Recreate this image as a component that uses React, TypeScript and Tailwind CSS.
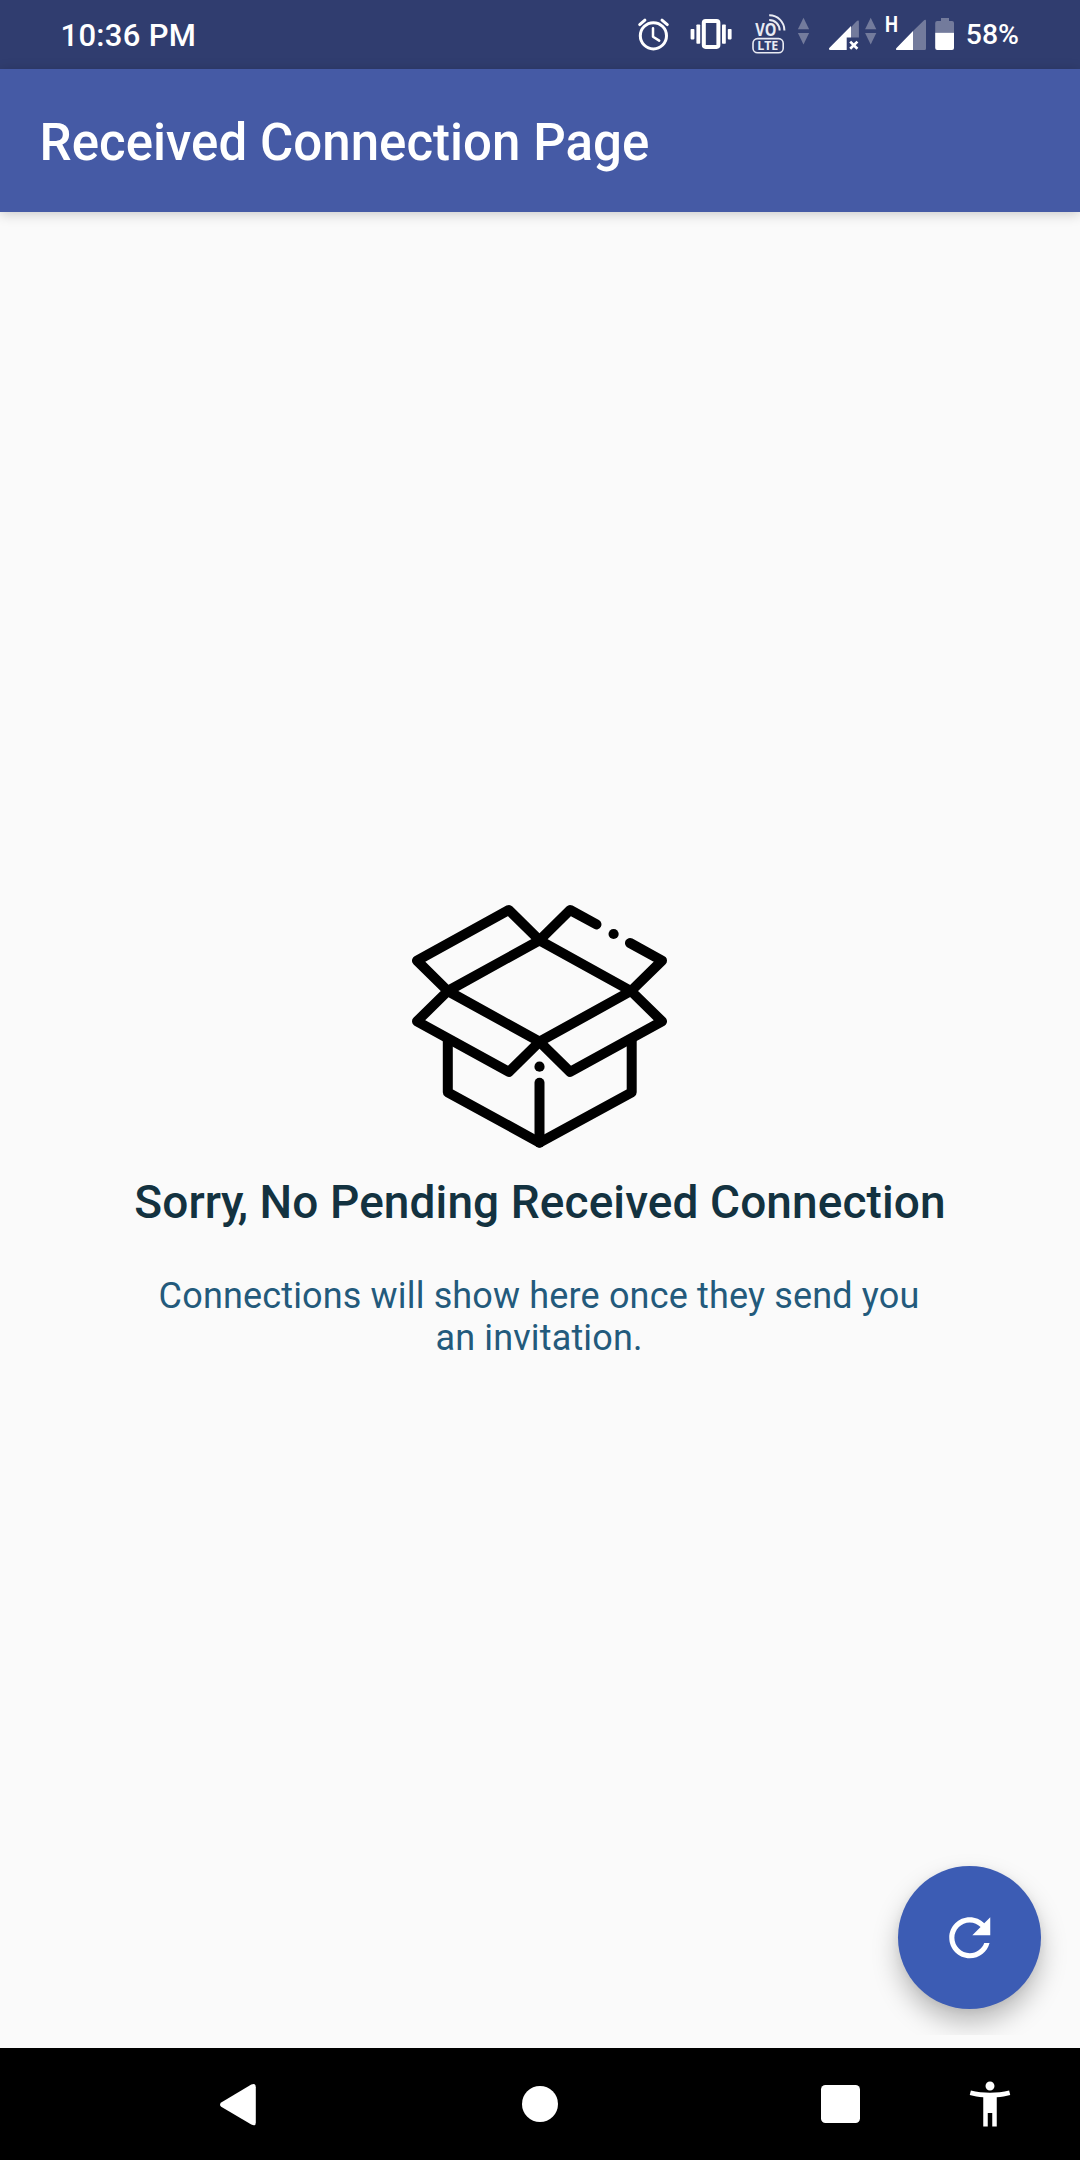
import type { ReactNode } from "react";

/* Status bar glyphs share one 69px tall strip; x is where the glyph's slice of the strip begins. */
function Glyph({ x, w, children }: { x: number; w: number; children: ReactNode }) {
  return (
    <svg width={w} height={69} viewBox={`${x} 0 ${w} 69`} className="block shrink-0 overflow-visible">
      {children}
    </svg>
  );
}

const DIM = "#737b9c";

function DataArrows({ x }: { x: number }) {
  return (
    <g fill={DIM}>
      <path d={`M${x} 29.2h11.2L${x + 5.6} 17.8z`} />
      <path d={`M${x} 33h11.2L${x + 5.6} 44.4z`} />
    </g>
  );
}

function StatusBar() {
  return (
    <header className="flex h-[69px] items-center justify-between bg-[#303d6f] pl-[60.5px] text-white">
      <span className="pt-0.5 text-[31px] leading-none font-medium tracking-[0.3px]">10:36 PM</span>
      <div className="flex items-center pr-[61px]">
        <Glyph x={632} w={54}>
          <g fill="none" stroke="#fff" strokeLinecap="round">
            <circle cx="653.4" cy="35.8" r="13.1" strokeWidth="3" />
            <path d="M653 28.2v8.6l6.2 3.8" strokeWidth="2.5" strokeLinejoin="round" />
            <path d="M639.7 24.6l5.2-4.4M662 20.2l5.3 4.4" strokeWidth="3" />
          </g>
        </Glyph>
        <Glyph x={686} w={62}>
          <rect x="703.8" y="20.9" width="14.6" height="26" rx="1.8" fill="none" stroke="#fff" strokeWidth="4" />
          <g fill="#fff">
            <rect x="696.4" y="24.5" width="3.8" height="19.2" rx=".8" />
            <rect x="690.6" y="29" width="3.8" height="10.4" rx=".8" />
            <rect x="722" y="24.5" width="3.8" height="19.2" rx=".8" />
            <rect x="727.8" y="29" width="3.8" height="10.4" rx=".8" />
          </g>
        </Glyph>
        <Glyph x={748} w={44}>
          <text x="755.2" y="36" fill="#e9ebf3" fontSize="17" fontWeight="700" textLength="21.2" lengthAdjust="spacingAndGlyphs" className="font-['Open_Sans',sans-serif]">VO</text>
          <g fill="none" stroke="#e9ebf3" strokeWidth="2">
            <path d="M769.2 15.3A15 15 0 0 1 784.4 30.4" />
            <path d="M769.2 20.1A10.4 10.4 0 0 1 779.7 30.4" />
            <rect x="753" y="38.6" width="30.2" height="14.2" rx="4.6" strokeWidth="1.6" />
          </g>
          <text x="757.2" y="50.2" fill="#e9ebf3" fontSize="12.4" fontWeight="700" className="font-['Open_Sans',sans-serif]">LTE</text>
        </Glyph>
        <Glyph x={792} w={34}>
          <DataArrows x={797.9} />
        </Glyph>
        <Glyph x={826} w={36}>
          <path d="M851 27.2l5.6-5.9c1.2-1.2 2.3-.9 2.3.7V37.5H851z" fill={DIM} />
          <path d="M851 26v11.5h-4.3V50h-16.4c-1.5 0-1.8-1.1-.8-2.2z" fill="#fff" />
          <path d="M850.2 41.6l7.2 7.2M857.4 41.6l-7.2 7.2" stroke="#fff" strokeWidth="2.7" fill="none" />
        </Glyph>
        <Glyph x={862} w={22}>
          <DataArrows x={865.1} />
        </Glyph>
        <Glyph x={884} w={44}>
          <text x="885" y="31.8" fill="#fff" fontSize="21.6" fontWeight="700" textLength="13" lengthAdjust="spacingAndGlyphs" className="font-['Roboto',sans-serif]">H</text>
          <path d="M913 31l10.8-10.5c1.2-1.2 2.2-.8 2.2.7V48.5q0 1.5-1.5 1.5H913z" fill={DIM} />
          <path d="M913 31v19h-15.6c-1.5 0-1.9-1.1-.9-2.1z" fill="#fff" />
        </Glyph>
        <Glyph x={928} w={38}>
          <path d="M935.2 32.8V23q0-2 2-2h3.8v-3h8v3h3q2 0 2 2v9.8z" fill={DIM} />
          <path d="M935.2 32.8H954V48q0 2-2 2h-14.8q-2 0-2-2z" fill="#fff" />
        </Glyph>
        <span className="pt-0.5 text-[28.4px] leading-none font-medium">58%</span>
      </div>
    </header>
  );
}

function OpenBox() {
  return (
    <svg width="256" height="250" viewBox="411 900 256 250" className="block" fill="none" stroke="#000" strokeWidth="10" strokeLinecap="round" strokeLinejoin="round">
      <path d="M539.5 940.3L631 991l-91.5 50.7L447.8 991z" />
      <path d="M539.5 940.3l-30.6-30.3L417 960.6 447.8 991 417 1021.3l91.9 50.6 30.6-30.2 30.6 30.2 91.9-50.6L631 991l31-30.4-32-17.6" />
      <path d="M539.5 940.3l30.6-30.3 26.4 14.4" />
      <path d="M447.8 1041v51.3l91.7 50.3 92.2-50.3V1041" />
      <path d="M539.5 1142.6v-59.8" />
      <circle cx="613.6" cy="934" r="5.1" fill="#000" stroke="none" />
      <circle cx="539.5" cy="1066.7" r="5.1" fill="#000" stroke="none" />
    </svg>
  );
}

function NavBar() {
  return (
    <nav className="flex h-[112px] items-center bg-black pl-[220px]">
      <svg width="36" height="42" viewBox="0 0 36 42" className="mt-px block" fill="#fff">
        <path d="M1.2 18.6L31.3.6Q35.8-1.2 35.8 3.2V38.4Q35.8 42.8 31.3 40.6L1.2 22.8Q-1.2 20.7 1.2 18.6z" />
      </svg>
      <span className="ml-[266px] block size-9 rounded-full bg-white" />
      <span className="ml-[263.3px] block size-[38.5px] rounded-[4.5px] bg-white" />
      <svg width="54" height="54" viewBox="0 0 24 24" className="ml-[103px] block" fill="#fff">
        <path d="M20.5 6c-2.61.7-5.67 1-8.5 1s-5.89-.3-8.5-1L3 8c1.86.5 4 .83 6 1v13h2v-6h2v6h2V9c2-.17 4.14-.5 6-1l-.5-2zM12 6c1.1 0 2-.9 2-2s-.9-2-2-2-2 .9-2 2 .9 2 2 2z" />
      </svg>
    </nav>
  );
}

export default function App() {
  return (
    <div className="flex h-[2160px] w-[1080px] flex-col overflow-hidden bg-[#fafafa] font-['Roboto',sans-serif]">
      <StatusBar />
      <div className="z-10 flex h-[143px] items-center bg-[#455aa5] pt-1 pl-[39.6px] shadow-[0_2px_12px_rgba(0,0,0,0.2)]">
        <h1 className="text-[51px] leading-none font-medium tracking-[0.03px] text-white">Received Connection Page</h1>
      </div>
      <main className="relative flex flex-1 flex-col items-center pt-[688px] pr-0.5">
        <OpenBox />
        <h2 className="mt-[25px] ml-0.5 text-[46px] leading-[54px] font-medium tracking-[0.09px] text-[#133240]">
          Sorr<span className="tracking-[-6px]">y</span>, No Pending Received Connection
        </h2>
        <p className="mt-[46px] w-[780px] text-center text-[36px] leading-[42.2px] tracking-[0.157px] text-[#235a7c]">
          Connections will show here once they send you an invitation.
        </p>
        <div className="absolute right-0 bottom-[13px] flex h-[220px] w-[240px] items-end justify-end overflow-hidden pr-[39px] pb-[26px]">
          <button
            aria-label="Refresh"
            className="flex size-[143px] items-center justify-center rounded-full bg-[#3c5cb4] shadow-[0_14px_26px_rgba(0,0,0,0.25),0_2px_8px_rgba(0,0,0,0.06)]"
          >
            <svg width="61.5" height="61.5" viewBox="0 0 24 24" fill="#fff">
              <path d="M17.65 6.35C16.2 4.9 14.21 4 12 4c-4.42 0-7.99 3.58-7.99 8s3.57 8 7.99 8c3.73 0 6.84-2.55 7.73-6h-2.08c-.82 2.33-3.04 4-5.65 4-3.31 0-6-2.69-6-6s2.69-6 6-6c1.66 0 3.14.69 4.22 1.78L13 11h7V4l-2.35 2.35z" />
            </svg>
          </button>
        </div>
      </main>
      <NavBar />
    </div>
  );
}
